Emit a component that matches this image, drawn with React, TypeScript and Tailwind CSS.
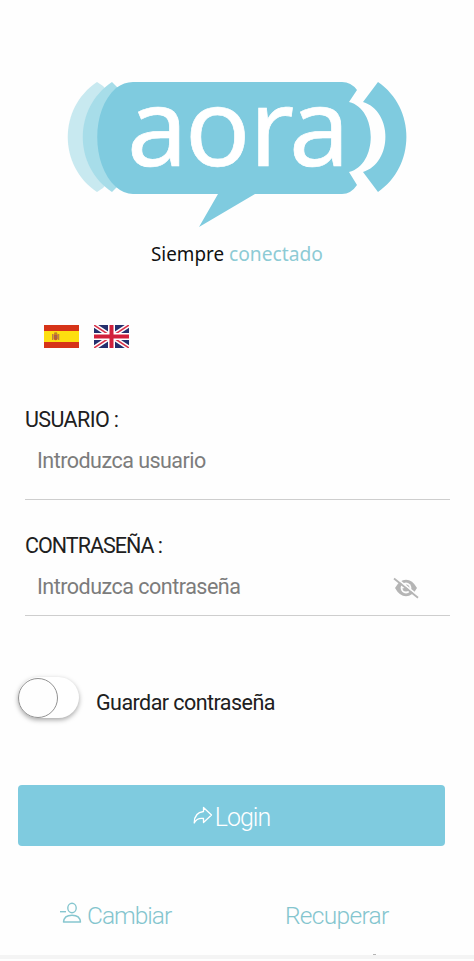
import React, { useState } from 'react';

const Logo = () => (
  <svg width="346" height="192" viewBox="64 78 346 192" className="mx-auto block shrink-0 overflow-visible" role="img" aria-label="aora">
    <path d="M97 82C58 108 58 166 97 192L103 188L110 180V94L103 86Z" fill="#c8e9f0" />
    <path d="M112 82C73 108 73 166 112 192L117 187L124 180V94L117 87Z" fill="#a7dde9" />
    <path
      d="M133 82H342Q351 82 357 90L349 102C378 109 378 165 349 172L357 185Q351 194 342 194H255L199 227L218 194H133Q124 194 116 187C91 164 91 110 116 88Q124 82 133 82Z"
      fill="#7fcbdf"
    />
    <path d="M378 82C416 108 416 166 378 192L363 172C393 163 393 111 363 102Z" fill="#7fcbdf" />
    <text
      x="127 185 249.5 289"
      y="166"
      fill="#fff"
      stroke="#fff"
      strokeWidth="0.7"
      fontSize="108"
      style={{ fontFamily: '"Noto Sans", sans-serif' }}
    >
      aora
    </text>
    <g fontSize="20.5" style={{ fontFamily: '"Noto Sans", sans-serif' }}>
      <text x="151" y="260.5" fill="#111" textLength="73" lengthAdjust="spacingAndGlyphs">Siempre</text>
      <text x="229" y="260.5" fill="#8dcbd5" textLength="94" lengthAdjust="spacingAndGlyphs">conectado</text>
    </g>
  </svg>
);

const SpainFlag = () => (
  <svg width="35" height="23" viewBox="0 0 35 23">
    <rect width="35" height="23" fill="#d63318" />
    <rect y="6" width="35" height="11" fill="#fddf10" />
    <path d="M8 9h1.3v6H8zM14 9h1.3v6H14z" fill="#b98245" />
    <path d="M9.7 9.2h4v4q0 2-2 2t-2-2z" fill="#bd5b35" />
    <path d="M10 8.7l.4-1.2h2.6l.4 1.2z" fill="#a8682c" />
    <path d="M10.7 10.7h2v2h-2z" fill="#986a58" />
  </svg>
);

const UkFlag = () => (
  <svg width="35" height="23" viewBox="0 0 35 23">
    <rect width="35" height="23" fill="#252f6d" />
    <path d="M0 0l35 23M35 0L0 23" stroke="#fff" strokeWidth="4.6" />
    <path d="M0 0l35 23M35 0L0 23" stroke="#d9334a" strokeWidth="1.5" />
    <path d="M17.5 0v23M0 11.5h35" stroke="#fff" strokeWidth="7" />
    <path d="M17.5 0v23M0 11.5h35" stroke="#d11f3a" strokeWidth="4" />
  </svg>
);

const EyeOff = () => (
  <svg width="26" height="22" viewBox="0 0 26 22" fill="none">
    <path d="M2 11Q6.5 2.8 13 2.8T24 11Q19.5 19.2 13 19.2T2 11Z" fill="#b5b5b5" />
    <circle cx="13" cy="11" r="5.4" fill="#fdfdfd" />
    <path d="M13 7.6a3.5 3.5 0 1 1-3.5 3.5c1.8.7 3.8-.8 3.5-3.5Z" fill="#b5b5b5" />
    <path d="M2.2 .2L26 19.4" stroke="#fdfdfd" strokeWidth="1.8" />
    <path d="M1 1.5L25 20.7" stroke="#b5b5b5" strokeWidth="1.8" />
  </svg>
);

const ShareArrow = () => (
  <svg width="20" height="19" viewBox="0 0 20 19" fill="none" stroke="#fff" strokeWidth="1.3" strokeLinejoin="round">
    <path d="M10.5 1.5L18.5 9L10.5 16.5V12.5Q4 11.5 1.2 17Q1.2 6.5 10.5 5.5Z" />
  </svg>
);

const UserSwitch = () => (
  <svg width="22" height="22" viewBox="0 0 22 22" fill="none" stroke="#86c6cf" strokeWidth="1.4">
    <ellipse cx="12" cy="6" rx="4.2" ry="4.7" />
    <path d="M3.5 20Q4 13.2 12 13.2T20.5 20Z" strokeLinejoin="round" />
    <path d="M0 9.7h6" />
  </svg>
);

const App: React.FC = () => {
  const [user, setUser] = useState('');
  const [password, setPassword] = useState('');
  const [visible, setVisible] = useState(false);
  const [remember, setRemember] = useState(false);

  return (
    <main className="flex h-[961px] w-[474px] flex-col overflow-hidden bg-[#fefefe] pt-[78px] font-[Roboto,sans-serif] text-[#202020]">
      <Logo />

      <div className="mt-[55px] ml-11 flex h-[23px] gap-[15px]">
        <button type="button" aria-label="Español"><SpainFlag /></button>
        <button type="button" aria-label="English"><UkFlag /></button>
      </div>

      <form onSubmit={(e) => e.preventDefault()} className="flex flex-col">
        <div className="mt-[57px] mr-6 ml-[25px] h-[95px] border-b border-[#cecece]">
          <label htmlFor="user" className="block h-[30px] text-[21.5px] leading-[30px] font-normal tracking-[-0.6px]">USUARIO :</label>
          <input
            id="user"
            value={user}
            onChange={(e) => setUser(e.target.value)}
            placeholder="Introduzca usuario"
            className="mt-[10px] block h-[32px] w-full bg-transparent pl-3 text-[21.5px] font-normal tracking-[-0.52px] outline-none placeholder:text-[#7c7c7c]"
          />
        </div>

        <div className="mt-[31px] mr-6 ml-[25px] h-[85px] border-b border-[#cecece]">
          <label htmlFor="password" className="block h-[30px] text-[21.5px] leading-[30px] font-normal tracking-[-1px]">CONTRASEÑA :</label>
          <div className="mt-[9px] flex h-[32px] items-center">
            <input
              id="password"
              type={visible || !password ? 'text' : 'password'}
              value={password}
              onChange={(e) => setPassword(e.target.value)}
              placeholder="Introduzca contraseña"
              className="h-full min-w-0 flex-1 bg-transparent pl-3 text-[21.5px] font-normal tracking-[-0.5px] outline-none placeholder:text-[#7c7c7c]"
            />
            <button type="button" aria-label="Mostrar contraseña" onClick={() => setVisible(!visible)} className="mt-[3px] mr-[31px]">
              <EyeOff />
            </button>
          </div>
        </div>

        <div className="mt-[62px] ml-[18px] flex h-[42px] items-start">
          <button
            type="button"
            role="switch"
            aria-checked={remember}
            aria-label="Guardar contraseña"
            onClick={() => setRemember(!remember)}
            className={`-mt-px flex h-[41px] w-[61px] rounded-full bg-white shadow-[0_2px_5px_rgba(0,0,0,0.35)] ${remember ? 'justify-end' : ''}`}
          >
            <span className="mt-px size-10 rounded-full border border-[#929292] bg-[#fefefe]" />
          </button>
          <span className="mt-[10px] ml-[17px] text-[21.5px] leading-[30px] font-normal tracking-[-0.55px]">Guardar contraseña</span>
        </div>

        <button type="submit" className="mt-[65px] ml-[18px] flex h-[61px] w-[427px] items-center justify-center rounded bg-[#7fcbdf] text-[25px] font-light tracking-[-1px] text-white">
          <ShareArrow />
          <span className="ml-[2px] pt-[5px]">Login</span>
        </button>
      </form>

      <div className="mt-[54px] flex h-8 items-center pl-[60px] text-[24.5px] leading-8 font-light tracking-[-1px] text-[#84c5ce]">
        <button type="button" className="flex w-[225px] items-center gap-[5px]">
          <span className="-mt-[6px]"><UserSwitch /></span>
          Cambiar
        </button>
        <button type="button" className="tracking-[-0.7px]">Recuperar</button>
      </div>

      <div className="mt-auto flex h-[7px] flex-col">
        <span className="ml-[373px] h-px w-[3px] bg-[#b5b5b5]" />
        <span className="h-1 bg-[#f4f4f4]" />
      </div>
    </main>
  );
};

export default App;
